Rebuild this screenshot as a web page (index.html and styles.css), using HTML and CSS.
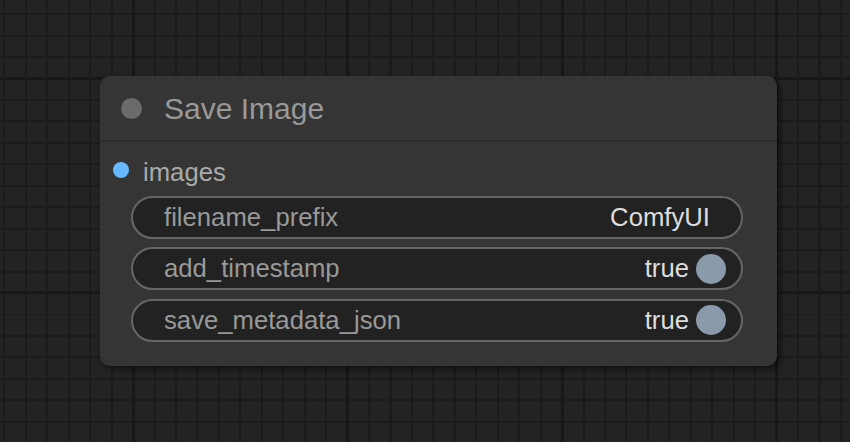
FILE: index.html
```html
<!DOCTYPE html>
<html>
<head>
<meta charset="utf-8">
<link rel="stylesheet" href="styles.css">
</head>
<body>
<div class="canvas">
  <div class="node">
    <div class="node-title">
      <span class="title-dot"></span>
      <span class="title-text">Save Image</span>
    </div>
    <div class="node-body">
      <div class="slot">
        <span class="slot-dot"></span>
        <span class="slot-label">images</span>
      </div>
      <div class="widgets">
        <div class="widget">
          <span class="w-label">filename_prefix</span>
          <span class="w-value text">ComfyUI</span>
        </div>
        <div class="widget">
          <span class="w-label">add_timestamp</span>
          <span class="w-value toggle">true<span class="knob"></span></span>
        </div>
        <div class="widget">
          <span class="w-label">save_metadata_json</span>
          <span class="w-value toggle">true<span class="knob"></span></span>
        </div>
      </div>
    </div>
  </div>
</div>
</body>
</html>
```
FILE: styles.css
```css
html, body {
  margin: 0;
  padding: 0;
}
body {
  width: 850px;
  height: 442px;
  overflow: hidden;
  font-family: "Liberation Sans", Arial, sans-serif;
  background-color: #232323;
  background-image:
    repeating-linear-gradient(90deg, transparent 0 131.7px, #181818 131.7px 134.7px, transparent 134.7px 214.5px),
    repeating-linear-gradient(180deg, transparent 0 76.6px, #181818 76.6px 79.6px, transparent 79.6px 214.5px),
    repeating-linear-gradient(90deg, transparent 0 3.4px, #1b1b1b 3.4px 5.4px, transparent 5.4px 21.45px),
    repeating-linear-gradient(180deg, transparent 0 13.2px, #1b1b1b 13.2px 15.2px, transparent 15.2px 21.45px);
}
.canvas {
  padding: 76px 0 0 100px;
}
.node {
  width: 677px;
  height: 290px;
  background: #353535;
  border-radius: 10px;
  box-shadow: 3px 3px 6px rgba(0, 0, 0, 0.55);
  display: flex;
  flex-direction: column;
}
.node-title {
  height: 64px;
  border-bottom: 2px solid #2b2b2b;
  display: flex;
  align-items: center;
  padding-left: 21px;
  gap: 22px;
}
.title-dot {
  width: 21px;
  height: 21px;
  border-radius: 50%;
  background: #6b6b6b;
}
.title-text {
  font-size: 30px;
  color: #999999;
  padding-top: 2px;
}
.node-body {
  padding-top: 18px;
}
.slot {
  height: 20px;
  display: flex;
  align-items: center;
  padding-left: 13px;
  gap: 14px;
}
.slot-dot {
  width: 16px;
  height: 16px;
  border-radius: 50%;
  background: #66b8ff;
}
.slot-label {
  font-size: 25.7px;
  color: #aaaaaa;
  padding-top: 4px;
}
.widgets {
  margin-top: 16px;
  margin-left: 31px;
  width: 612px;
  display: flex;
  flex-direction: column;
  gap: 8.4px;
}
.widget {
  box-sizing: border-box;
  height: 43px;
  border: 2px solid #666666;
  border-radius: 22px;
  background: #222222;
  display: flex;
  align-items: center;
  justify-content: space-between;
  padding-left: 31px;
  font-size: 25.7px;
}
.w-label {
  color: #999999;
}
.w-value {
  color: #dddddd;
  display: flex;
  align-items: center;
}
.w-value.text {
  padding-right: 31px;
}
.w-value.toggle {
  padding-right: 15px;
  gap: 7px;
}
.knob {
  width: 30px;
  height: 30px;
  border-radius: 50%;
  background: #8a9aab;
}
```
